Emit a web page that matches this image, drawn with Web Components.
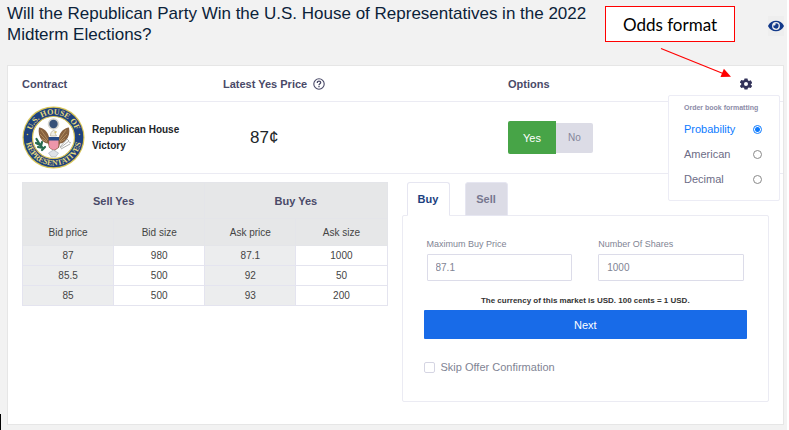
<!DOCTYPE html>
<html lang="en">
<head>
<meta charset="utf-8">
<meta name="viewport" content="width=device-width, initial-scale=1">
<title>Market</title>
<style>
  body {
    margin: 0;
    min-height: 100vh;
    box-sizing: border-box;
    background: #f2f2f2;
    border-right: 2px solid #fff;
    font-family: "Liberation Sans", Arial, sans-serif;
    font-size: 11px;
    color: #212529;
  }
</style>
</head>
<body>
<market-page>
  <market-title slot="title">Will the Republican Party Win the U.S. House of Representatives in the 2022 Midterm Elections?</market-title>
  <contract-row price="87¢">
    <house-seal slot="logo"></house-seal>
    Republican House Victory
  </contract-row>
  <order-book slot="book"></order-book>
  <order-ticket slot="ticket"></order-ticket>
</market-page>
<text-callout>Odds format</text-callout>
<text-caret></text-caret>

<script>
const COLUMNS = 'minmax(0, 201fr) minmax(0, 285fr) minmax(0, 261fr)';

function attach(el, html) {
  const template = document.createElement('template');
  template.innerHTML = html;
  const root = el.attachShadow({ mode: 'open' });
  root.appendChild(template.content.cloneNode(true));
  return root;
}

class MarketTitle extends HTMLElement {
  constructor() {
    super();
    attach(this, `
      <style>
      :host {
        display: flex;
        justify-content: space-between;
        align-items: flex-end;
        padding: 3px 3px 0 7px;
      }
      h1 {
        margin: 0;
        max-width: 590px;
        font-size: 17px;
        font-weight: normal;
        line-height: 21px;
        color: #0b2239;
      }
      button {
        display: flex;
        align-items: center;
        width: 16px;
        height: 20px;
        margin-bottom: 9px;
        padding: 0;
        border: 0;
        background: #eee;
      }
      svg { width: 16px; height: 14px; }
      </style>
      <h1><slot></slot></h1>
      <button type="button" aria-label="Watch market">
        <svg viewBox="0 0 576 512"><path fill="#12398a" d="M572.5 241.400C518.300 135.600 410.900 64 288 64S57.700 135.600 3.500 241.400a32.400 32.400 0 0 0 0 29.200C57.700 376.400 165.100 448 288 448s230.300-71.600 284.500-177.400a32.400 32.400 0 0 0 0-29.200zM288 400a144 144 0 1 1 144-144 143.900 143.900 0 0 1-144 144zm0-240a95.300 95.300 0 0 0-25.300 3.800 47.900 47.900 0 0 1-66.900 66.900A95.800 95.800 0 1 0 288 160z"/></svg>
      </button>
    `);
  }
}

class MarketPage extends HTMLElement {
  constructor() {
    super();
    attach(this, `
      <style>
      :host { display: block; }
      .card {
        margin: 20px 3px 5px 7px;
        background: #fff;
        border: 1px solid #e6e6e6;
      }
      .head {
        display: grid;
        grid-template-columns: ${COLUMNS};
        align-items: center;
        height: 35px;
        padding: 0 14px;
        border-bottom: 1px solid #ebebf3;
        font-weight: bold;
        color: #4a4a68;
      }
      .label { display: flex; align-items: center; gap: 6px; }
      .last { display: flex; justify-content: space-between; align-items: center; }
      .help { width: 12px; height: 12px; }
      .trade {
        display: grid;
        grid-template-columns: minmax(0, 366fr) minmax(0, 368fr);
        gap: 14px;
        align-items: start;
        padding: 8px 14px 22px;
      }
      </style>
      <slot name="title"></slot>
      <main class="card">
        <div class="head">
          <span>Contract</span>
          <span class="label">Latest Yes Price
            <svg class="help" viewBox="0 0 12 12" fill="none" stroke="#4a4a68" stroke-width="1.100">
              <circle cx="6" cy="6" r="5.200"/>
              <path d="M4.300 4.900C4.300 3.700 5 3.100 6 3.100s1.700.600 1.700 1.500C7.700 5.800 6 5.900 6 7.200M6 8.100v1.200" stroke-width="1.300"/>
            </svg>
          </span>
          <span class="last">Options <odds-menu></odds-menu></span>
        </div>
        <slot></slot>
        <div class="trade">
          <slot name="book"></slot>
          <slot name="ticket"></slot>
        </div>
      </main>
    `);
  }
}

class OddsMenu extends HTMLElement {
  constructor() {
    super();
    const root = attach(this, `
      <style>
      :host {
        display: block;
        position: relative;
        margin-right: 17px;
        font-weight: normal;
        color: #6c6c86;
      }
      button { display: block; padding: 0; border: 0; background: none; }
      svg { display: block; width: 12px; height: 12px; }
      fieldset {
        position: absolute;
        z-index: 1;
        top: 17px;
        right: -28px;
        width: 112px;
        box-sizing: border-box;
        margin: 0;
        padding: 7px 15px 8px;
        border: 1px solid #ececf5;
        border-radius: 2px;
        background: #fff;
      }
      fieldset[hidden] { display: none; }
      .name {
        font-size: 7px;
        line-height: 9px;
        font-weight: bold;
        white-space: nowrap;
        color: #8c8ca8;
        padding-bottom: 5px;
      }
      label {
        display: flex;
        justify-content: space-between;
        align-items: center;
        height: 25px;
      }
      label:has(:checked) { color: #0d7bff; }
      input {
        appearance: none;
        box-sizing: border-box;
        width: 9px;
        height: 9px;
        margin: 0 2px 0 0;
        border: 1px solid #8a8a8a;
        border-radius: 50%;
      }
      input:checked {
        border-color: #0d7bff;
        background: radial-gradient(circle, #0d7bff 2px, #fff 3px);
      }
      </style>
      <button type="button" aria-label="Order book formatting">
        <svg viewBox="0 0 24 24"><path fill="#33335a" fill-rule="evenodd" d="M9 1h6l.8 3.700 2 1.200L21.500 4.700l3 5.300-2.900 2.500v1L24.500 16l-3 4-3.700-1-2 1.200L15 23H9l-.8-2.800-2-1.200-3.700 1-3-4 2.900-2.500v-3L-.5 9l3-5 3.700 1.200 2-1.200zM12 8a4 4 0 1 0 0 8 4 4 0 0 0 0-8z"/></svg>
      </button>
      <fieldset aria-label="Order book formatting">
        <div class="name">Order book formatting</div>
        <label>Probability <input type="radio" name="odds" checked></label>
        <label>American <input type="radio" name="odds"></label>
        <label>Decimal <input type="radio" name="odds"></label>
      </fieldset>
    `);
    const menu = root.querySelector('fieldset');
    root.querySelector('button').addEventListener('click', () => {
      menu.hidden = !menu.hidden;
    });
  }
}

class HouseSeal extends HTMLElement {
  constructor() {
    super();
    attach(this, `
      <style>
      :host { display: block; width: 63px; height: 63px; }
      svg { display: block; width: 100%; height: 100%; }
      text { font: bold 8px "Liberation Serif", serif; fill: #e8db7c; }
      </style>
      <svg viewBox="0 0 63 63">
        <circle cx="31.500" cy="31.500" r="31" fill="#d9c555"/>
        <circle cx="31.500" cy="31.500" r="29.800" fill="#1f427e"/>
        <circle cx="31.500" cy="31.500" r="21" fill="#fff" stroke="#d9c555" stroke-width="1.200"/>
        <path id="upper" fill="none" d="M8.500 31.500a23 23 0 0 1 46 0"/>
        <path id="lower" fill="none" d="M3.500 31.500a28 28 0 0 0 56 0"/>
        <text text-anchor="middle"><textPath href="#upper" startOffset="50%">U.S. HOUSE OF</textPath></text>
        <text text-anchor="middle"><textPath href="#lower" startOffset="50%">REPRESENTATIVES</textPath></text>
        <circle cx="5.500" cy="28.500" r="0.800" fill="#d9c555"/>
        <circle cx="57.500" cy="28.500" r="0.800" fill="#d9c555"/>
        <circle cx="31.500" cy="18" r="5.800" fill="#d6d5cf"/>
        <circle cx="31.500" cy="18" r="4.200" fill="#355078"/>
        <path fill="#87613f" d="M27 31c-1-5-5-9-10-9.500-1 5 0 9 3 13 2 2 4 3 6 3l1 4 4 3h2l4-3 1-4c2 0 4-1 6-3 3-4 4-8 3-13-5 .5-9 4.500-10 9.500z"/>
        <path fill="none" stroke="#c29d6b" stroke-width="0.700" d="M19 24l7 10M18 28l7 7M20 33l5 3M44 24l-7 10M45 28l-7 7M43 33l-5 3"/>
        <path fill="#f0eee5" stroke="#9b8b6c" stroke-width="0.500" d="M28.500 30c0-3 1-5 3-5.500l3 1.200-1.700.8 1.700 3.500z"/>
        <path fill="#e6c453" d="M32.500 25.500l2.500.5-2 1.200z"/>
        <path fill="#e9839a" d="M27 31h9.500v8.500c0 2-2 3.500-4.700 4.500-2.800-1-4.800-2.500-4.800-4.500z"/>
        <path stroke="#f6bcc8" stroke-width="0.700" d="M29 34v8M31 34v9.500M33 34v9.500M35 34v8"/>
        <path fill="#274a87" d="M26.500 31h10.500v3.500h-10.500z"/>
        <path fill="#dfe3e8" stroke="#8e9cab" stroke-width="0.500" d="M31.500 44l5 3-3 4h-4l-3-4z"/>
        <path fill="none" stroke="#276b50" stroke-width="2.200" stroke-linecap="round" d="M14.500 33l3 5 3 4M14 37l4 2M20 36l-1 4M16 41l5 1M20 44l3-3"/>
        <path fill="none" stroke="#a5a7a5" stroke-width="0.900" d="M38 42l9-7M39 43l9-5M38 41l7-8M45 33l2 2M47 36l2 1"/>
      </svg>
    `);
  }
}

class ContractRow extends HTMLElement {
  constructor() {
    super();
    const root = attach(this, `
      <style>
      :host {
        display: grid;
        grid-template-columns: ${COLUMNS};
        align-items: center;
        height: 71px;
        padding: 0 14px;
        border-bottom: 1px solid #ebebf3;
      }
      .contract {
        display: flex;
        align-items: center;
        gap: 7px;
        padding-right: 24px;
        font-size: 10px;
        font-weight: bold;
        line-height: 16px;
      }
      ::slotted([slot=logo]) { flex: none; }
      .price { padding-left: 27px; font-size: 17px; }
      .options { display: flex; align-items: center; }
      button {
        font: inherit;
        border: 0;
        padding: 0;
        width: 37px;
        height: 30px;
        font-size: 10px;
        color: #85859a;
        background: #dcdce6;
        border-radius: 0 2px 2px 0;
      }
      .yes {
        width: 48px;
        height: 33px;
        font-size: 11px;
        color: #fff;
        background: #47a447;
        border-radius: 2px 0 0 2px;
      }
      </style>
      <div class="contract"><slot name="logo"></slot><span><slot></slot></span></div>
      <div class="price"></div>
      <div class="options">
        <button type="button" class="yes">Yes</button>
        <button type="button">No</button>
      </div>
    `);
    root.querySelector('.price').textContent = this.getAttribute('price');
  }
}

class OrderBook extends HTMLElement {
  constructor() {
    super();
    const root = attach(this, `
      <style>
      :host { display: block; }
      table {
        width: 100%;
        table-layout: fixed;
        border-collapse: collapse;
        text-align: center;
        font-size: 10px;
        color: #444;
      }
      th, td { padding: 0; border: 1px solid #e4e4ef; }
      th { height: 26px; background: #e6e7e8; font-weight: normal; border-color: #e4e5e9; }
      .side th { height: 35px; font-size: 11px; font-weight: bold; color: #4a4a68; }
      td { height: 19px; }
      td:nth-child(odd) { background: #ecedee; }
      </style>
      <table>
        <thead>
          <tr class="side"><th colspan="2">Sell Yes</th><th colspan="2">Buy Yes</th></tr>
          <tr><th>Bid price</th><th>Bid size</th><th>Ask price</th><th>Ask size</th></tr>
        </thead>
        <tbody></tbody>
      </table>
    `);
    const rows = [
      ['87', '980', '87.1', '1000'],
      ['85.5', '500', '92', '50'],
      ['85', '500', '93', '200'],
    ];
    root.querySelector('tbody').innerHTML = rows
      .map(row => `<tr>${row.map(cell => `<td>${cell}</td>`).join('')}</tr>`)
      .join('');
  }
}

class OrderTicket extends HTMLElement {
  constructor() {
    super();
    const root = attach(this, `
      <style>
      :host { display: block; color: #7f8494; }
      .tabs { display: flex; gap: 15px; padding-left: 5px; }
      button { font: inherit; padding: 0; cursor: pointer; }
      .tabs button {
        width: 43px;
        height: 34px;
        margin-bottom: -1px;
        font-weight: bold;
        color: #77778f;
        background: #dcdce6;
        border: 1px solid #e6e6f1;
        border-radius: 3px 3px 0 0;
      }
      .tabs button[aria-selected=true] {
        position: relative;
        color: #1c3f80;
        background: #fff;
        border-bottom-color: #fff;
      }
      form {
        padding: 22px 21px 26px;
        border: 1px solid #ebebf3;
        border-radius: 2px;
      }
      .fields {
        display: grid;
        grid-template-columns: 1fr 1fr;
        gap: 26px;
        padding: 0 3px;
      }
      .fields label { display: block; font-size: 9px; line-height: 12px; }
      .fields input {
        display: block;
        box-sizing: border-box;
        width: 100%;
        height: 27px;
        margin-top: 4px;
        padding: 0 8px;
        border: 1px solid #dcdce9;
        border-radius: 1px;
        font: inherit;
        font-size: 10px;
        color: #7f8494;
      }
      p {
        margin: 14px 0 3px;
        font-size: 8px;
        line-height: 12px;
        font-weight: bold;
        text-align: center;
        color: #333;
      }
      .next {
        display: block;
        width: 100%;
        height: 29px;
        border: 0;
        border-radius: 1px;
        color: #fff;
        background: #186be8;
      }
      .skip { display: flex; align-items: center; gap: 6px; margin-top: 20px; line-height: 16px; }
      .skip input {
        appearance: none;
        box-sizing: border-box;
        width: 11px;
        height: 11px;
        margin: 0;
        border: 1px solid #d5d5e3;
        border-radius: 2px;
      }
      .skip input:checked { background: #186be8; }
      </style>
      <div class="tabs" role="tablist">
        <button type="button" role="tab" aria-selected="true">Buy</button>
        <button type="button" role="tab" aria-selected="false">Sell</button>
      </div>
      <form>
        <div class="fields">
          <label>Maximum Buy Price <input type="text" value="87.1"></label>
          <label>Number Of Shares <input type="text" value="1000"></label>
        </div>
        <p>The currency of this market is USD. 100 cents = 1 USD.</p>
        <button type="button" class="next">Next</button>
        <label class="skip"><input type="checkbox"> Skip Offer Confirmation</label>
      </form>
    `);
    const tabs = root.querySelectorAll('[role=tab]');
    tabs.forEach(tab => tab.addEventListener('click', () => {
      tabs.forEach(t => t.setAttribute('aria-selected', t === tab));
    }));
  }
}

// note box with an arrow down to the settings gear
class TextCallout extends HTMLElement {
  constructor() {
    super();
    attach(this, `
      <style>
      :host { position: absolute; top: 6px; right: 54px; width: 130px; }
      .box {
        height: 34px;
        line-height: 36px;
        border: 1px solid #f00;
        background: #fff;
        color: #000;
        text-align: center;
        font-family: Lato, sans-serif;
        font-size: 17px;
      }
      svg { display: block; width: 130px; height: 36px; }
      </style>
      <div class="box"><slot></slot></div>
      <svg viewBox="0 0 130 36" fill="#f00">
        <path d="M56 6.500L118 31.500" stroke="#f00" stroke-width="1.200"/>
        <path d="M126 34.700L115.500 34.900L118.900 26.700z"/>
      </svg>
    `);
  }
}

class TextCaret extends HTMLElement {
  constructor() {
    super();
    attach(this, `
      <style>
      :host { position: absolute; left: 0; bottom: 0; width: 1px; height: 16px; background: #000; }
      </style>
    `);
  }
}

customElements.define('market-title', MarketTitle);
customElements.define('odds-menu', OddsMenu);
customElements.define('house-seal', HouseSeal);
customElements.define('contract-row', ContractRow);
customElements.define('order-book', OrderBook);
customElements.define('order-ticket', OrderTicket);
customElements.define('market-page', MarketPage);
customElements.define('text-callout', TextCallout);
customElements.define('text-caret', TextCaret);
</script>
</body>
</html>
